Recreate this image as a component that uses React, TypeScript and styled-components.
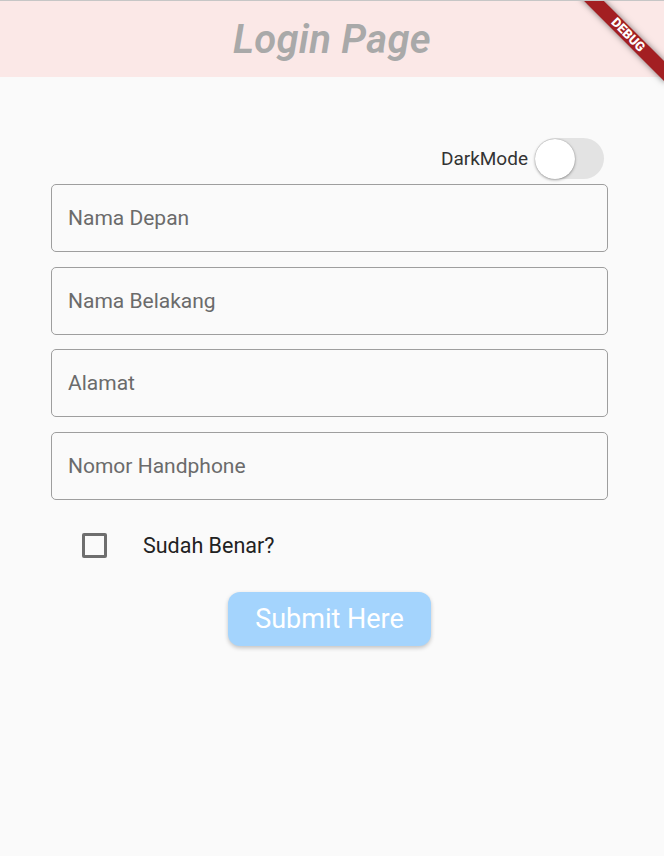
import React, { useState } from "react";
import styled, { createGlobalStyle } from "styled-components";

const Global = createGlobalStyle`
  html, body { margin: 0; padding: 0; background: #fafafa; }
  body { font-family: Roboto, "Noto Sans", sans-serif; }
  * { box-sizing: border-box; }
`;

const Page = styled.div`
  position: relative;
  width: 664px;
  height: 856px;
  overflow: hidden;
  background: #fafafa;
  border-top: 1px solid #c6c6c6;
`;

const Header = styled.header`
  height: 76px;
  background: #fbe8e7;
  display: flex;
  align-items: center;
  justify-content: center;
`;

const Title = styled.h1`
  margin: 0;
  font-family: Roboto, sans-serif;
  font-style: italic;
  font-weight: 600;
  font-size: 40px;
  color: #a9a9a9;
  letter-spacing: 0.3px;
`;

const BannerClip = styled.div`
  position: absolute;
  top: 0;
  right: 0;
  width: 110px;
  height: 110px;
  overflow: hidden;
  pointer-events: none;
`;

const Banner = styled.div`
  position: absolute;
  left: 14px;
  top: 27px;
  width: 120px;
  height: 14px;
  transform: rotate(45deg);
  background: #a31f22;
  box-shadow: 0 0 6px rgba(0, 0, 0, 0.5);
  display: flex;
  align-items: center;
  justify-content: center;
  color: #fff;
  font-family: Roboto, sans-serif;
  font-weight: 900;
  font-size: 13px;
  line-height: 14px;
`;

const Content = styled.main`
  width: 557px;
  margin-left: 51px;
  padding-top: 59px;
  display: flex;
  flex-direction: column;
`;

const ModeRow = styled.div`
  display: flex;
  justify-content: flex-end;
  align-items: center;
  gap: 7px;
  padding-right: 4px;
  height: 44px;
  margin-bottom: 4px;
`;

const ModeLabel = styled.span`
  font-size: 19px;
  color: #333;
`;

const Track = styled.button<{ $on: boolean }>`
  position: relative;
  width: 69px;
  height: 41px;
  border-radius: 21px;
  border: none;
  padding: 0;
  background: ${(p) => (p.$on ? "#90caf9" : "#e3e3e3")};
  cursor: pointer;
`;

const Thumb = styled.span<{ $on: boolean }>`
  position: absolute;
  top: 1px;
  left: ${(p) => (p.$on ? "29px" : "0px")};
  width: 40px;
  height: 40px;
  border-radius: 50%;
  background: ${(p) => (p.$on ? "#2196f3" : "#fff")};
  box-shadow: 0 1px 3px rgba(0, 0, 0, 0.35), 0 0 1px rgba(0, 0, 0, 0.3);
`;

const Fields = styled.div`
  display: flex;
  flex-direction: column;
  gap: 14.5px;
`;

const Field = styled.input`
  width: 100%;
  height: 68px;
  border: 1px solid #9e9e9e;
  border-radius: 5px;
  background: transparent;
  padding: 0 16px;
  font-family: Roboto, sans-serif;
  font-size: 21px;
  color: #222;
  outline: none;
  &::placeholder { color: #6b6b6b; }
`;

const CheckRow = styled.label`
  display: flex;
  align-items: center;
  height: 44px;
  margin-top: 24px;
  padding-left: 31px;
  gap: 36px;
  cursor: pointer;
`;

const Box = styled.span<{ $checked: boolean }>`
  width: 25px;
  height: 25px;
  border: 3px solid #6e6e6e;
  border-radius: 2px;
  background: ${(p) => (p.$checked ? "#6e6e6e" : "transparent")};
`;

const CheckText = styled.span`
  font-size: 21.5px;
  color: #222;
`;

const ButtonRow = styled.div`
  display: flex;
  justify-content: center;
  margin-top: 24px;
`;

const Submit = styled.button`
  width: 203px;
  height: 54px;
  border: none;
  border-radius: 12px;
  background: #a4d4fd;
  color: #fff;
  font-family: Roboto, sans-serif;
  font-size: 27px;
  box-shadow: 0 2px 4px rgba(0, 0, 0, 0.22);
  cursor: pointer;
`;

export default function App() {
  const [dark, setDark] = useState(false);
  const [checked, setChecked] = useState(false);
  return (
    <Page>
      <Global />
      <Header>
        <Title>Login Page</Title>
      </Header>
      <BannerClip>
        <Banner>DEBUG</Banner>
      </BannerClip>
      <Content>
        <ModeRow>
          <ModeLabel>DarkMode</ModeLabel>
          <Track $on={dark} onClick={() => setDark(!dark)}>
            <Thumb $on={dark} />
          </Track>
        </ModeRow>
        <Fields>
          <Field placeholder="Nama Depan" />
          <Field placeholder="Nama Belakang" />
          <Field placeholder="Alamat" />
          <Field placeholder="Nomor Handphone" />
        </Fields>
        <CheckRow onClick={() => setChecked(!checked)}>
          <Box $checked={checked} />
          <CheckText>Sudah Benar?</CheckText>
        </CheckRow>
        <ButtonRow>
          <Submit>Submit Here</Submit>
        </ButtonRow>
      </Content>
    </Page>
  );
}
